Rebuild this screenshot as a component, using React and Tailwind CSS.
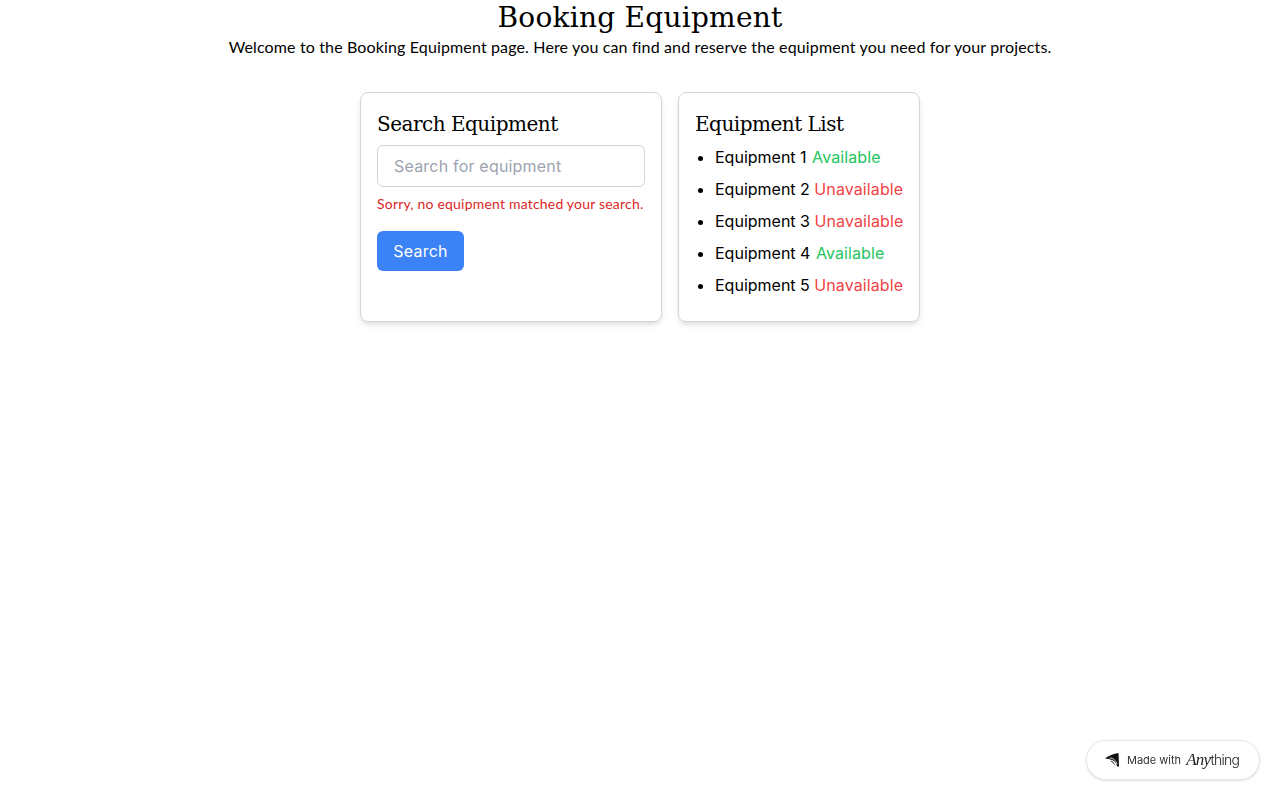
const items = [
  { name: 'Equipment 1', available: true },
  { name: 'Equipment 2', available: false },
  { name: 'Equipment 3', available: false },
  { name: 'Equipment 4', available: true },
  { name: 'Equipment 5', available: false },
];

const heading = "font-['DejaVu_Serif',serif]";
const inter = "font-['Inter',sans-serif]";

export default function App() {
  return (
    <div className="min-h-[800px] bg-white text-black">
      <div className="flex flex-col items-center">
        <h1 className={`${heading} text-[28px] leading-[36px] text-center tracking-[0.25px]`}>Booking Equipment</h1>
        <p className="font-['Lato',sans-serif] text-base leading-6 -mt-px text-center tracking-[0.14px]">
          Welcome to the Booking Equipment page. Here you can find and reserve the equipment you need for your projects.
        </p>
      </div>

      <div className={`${inter} flex justify-center gap-4 mt-[33px]`}>
        <div className="w-[302px] h-[230px] border border-gray-300 rounded-lg shadow-md p-4">
          <h2 className={`${heading} text-[20px] leading-7 mt-px mb-[7px] tracking-[-0.5px]`}>Search Equipment</h2>
          <input
            className="w-full h-[42px] border border-[#d1d5db] rounded-md px-4 text-base text-black placeholder:text-[#9ca3af] tracking-[0.2px] outline-none"
            placeholder="Search for equipment"
          />
          <p className="font-['Lato',sans-serif] text-sm leading-5 text-[#dc2626] mt-[7px] tracking-[0.2px] whitespace-nowrap">
            Sorry, no equipment matched your search.
          </p>
          <button className="block mt-[17px] w-[87px] h-10 bg-[#3b82f6] text-white rounded-md text-base tracking-[0.2px]">Search</button>
        </div>

        <div className="w-[242px] h-[230px] border border-gray-300 rounded-lg shadow-md p-4">
          <h2 className={`${heading} text-[20px] leading-7 mt-px mb-[7px] tracking-[-0.5px]`}>Equipment List</h2>
          <ul className="list-disc pl-5 flex flex-col gap-2">
            {items.map((item) => (
              <li key={item.name} className="text-base leading-6 whitespace-nowrap">
                {item.name}{' '}
                <span className={item.available ? 'ml-px tracking-[0.1px] text-[#22c55e]' : 'tracking-[0.1px] text-[#ef4444]'}>
                  {item.available ? 'Available' : 'Unavailable'}
                </span>
              </li>
            ))}
          </ul>
        </div>
      </div>

      {/* Made with badge */}
      <div className="fixed right-5 bottom-5 w-[174px] h-10 bg-white border border-gray-200 rounded-full shadow-sm flex items-center pl-[18px] gap-2">
        <svg width="14" height="14" viewBox="0 0 14 14" fill="#111">
          <path d="M0 5.5 C3.5 2.5 8.5 0.8 13.5 0 L14 13.5 L12 13.5 C11.8 10.5 10 8 7 7 C5 6.3 2.5 5.8 0 5.5Z" />
          <path d="M5 7.6 C7.8 8 9.6 10 10.2 13 C9 10.8 7.3 9 5 7.6Z" />
          <path d="M4.5 5 C8 4.8 11 7.5 12 11" fill="none" stroke="#fff" strokeWidth="0.8" />
        </svg>
        <span className="font-['Inter',sans-serif] text-[11px] text-[#333]">Made with</span>
        <span className="flex items-baseline text-[#222] -ml-[3px]">
          <span className="font-['Liberation_Serif',serif] italic text-[17px] tracking-[-0.7px]">Any</span>
          <span className="font-['Inter',sans-serif] font-light text-[14px] tracking-[-0.7px]">thing</span>
        </span>
      </div>
    </div>
  );
}
